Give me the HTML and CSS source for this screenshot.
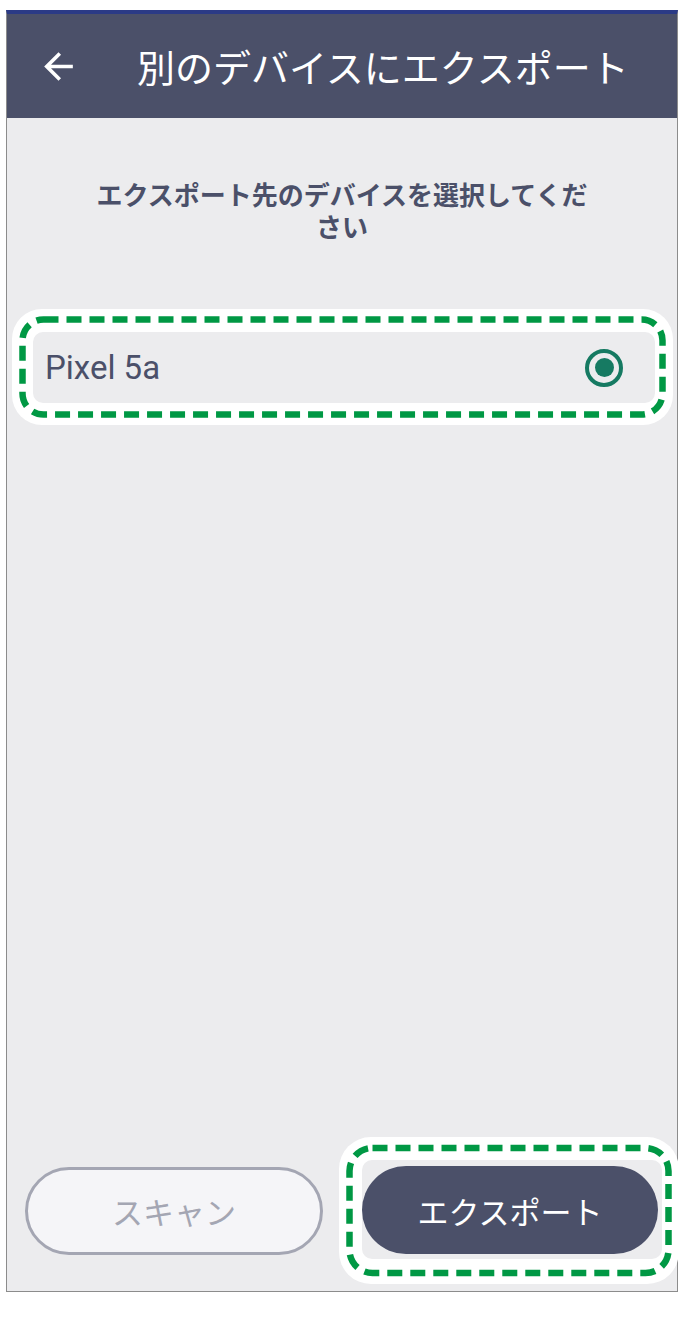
FILE: index.html
```html
<!DOCTYPE html>
<html lang="ja">
<head>
  <meta charset="UTF-8" />
  <meta name="viewport" content="width=device-width, initial-scale=1.0" />
  <title>別のデバイスにエクスポート</title>
  <link rel="stylesheet" href="styles.css">
</head>
<body>
  <div class="phone">
    <header class="appbar">
      <svg class="back" viewBox="0 0 24 24" width="43" height="43">
        <path d="M20 11H7.83l5.59-5.59L12 4l-8 8 8 8 1.41-1.41L7.83 13H20v-2z" fill="#fff"/>
      </svg>
      <h1>別のデバイスにエクスポート</h1>
    </header>

    <main class="content">
      <p class="prompt">エクスポート先のデバイスを選択してください</p>

      <div class="mark mark-device">
        <svg class="dash" width="661" height="116" viewBox="0 0 661 116">
          <rect x="10.5" y="10.5" width="640" height="95" rx="21" ry="21"/>
        </svg>
        <div class="device">
          <span class="device-name">Pixel 5a</span>
          <span class="radio"><span class="radio-dot"></span></span>
        </div>
      </div>

      <div class="actions">
        <button class="btn btn-scan">スキャン</button>
        <div class="mark mark-export">
          <svg class="dash" width="340" height="147" viewBox="0 0 340 147">
            <rect x="10.5" y="11" width="319" height="125" rx="23" ry="23"/>
          </svg>
          <div class="shot">
            <button class="btn btn-export">エクスポート</button>
          </div>
        </div>
      </div>
    </main>
  </div>
</body>
</html>
```

FILE: styles.css
```css
* {
  box-sizing: border-box;
}
body {
  margin: 0;
  background: #fff;
  font-family: "Noto Sans CJK JP", "Noto Sans", sans-serif;
}
.phone {
  margin: 10px 0 0 6px;
  width: 672px;
  height: 1282px;
  border: 1px solid #8c8c8c;
  border-top: 4px solid #2b3a86;
  display: flex;
  flex-direction: column;
  background: #ececee;
}
.appbar {
  height: 104px;
  flex-shrink: 0;
  background: #4b5069;
  display: flex;
  align-items: center;
  padding-left: 30px;
}
.back {
  flex-shrink: 0;
}
.appbar h1 {
  margin: 0 0 0 57px;
  font-size: 38px;
  font-weight: 400;
  color: #fff;
  line-height: 1;
}
.content {
  flex: 1;
  display: flex;
  flex-direction: column;
}
.prompt {
  width: 510px;
  margin: 60px auto 0;
  text-align: center;
  font-size: 26px;
  font-weight: 700;
  line-height: 32px;
  color: #4b5069;
}
.mark {
  position: relative;
  background: #fff;
  flex-shrink: 0;
}
.dash {
  position: absolute;
  left: 0;
  top: 0;
  pointer-events: none;
}
.dash rect {
  fill: none;
  stroke: #009844;
  stroke-width: 6.5;
  stroke-dasharray: 15 8;
}
.mark-device {
  width: 661px;
  height: 116px;
  margin: 67px 0 0 5px;
  border-radius: 30px;
  padding: 23px 18px 22px 21px;
}
.device {
  height: 71px;
  background: #ececee;
  border-radius: 10px;
  display: flex;
  align-items: center;
  justify-content: space-between;
  padding: 0 32px 0 12px;
}
.device-name {
  font-family: Roboto, "Noto Sans", sans-serif;
  font-size: 33px;
  color: #4b5069;
}
.radio {
  width: 38px;
  height: 38px;
  border: 4px solid #167a62;
  border-radius: 50%;
  display: flex;
  align-items: center;
  justify-content: center;
}
.radio-dot {
  width: 19px;
  height: 19px;
  border-radius: 50%;
  background: #167a62;
}
.actions {
  margin-top: auto;
  margin-bottom: 7px;
  padding-left: 18px;
  display: flex;
  align-items: center;
}
.btn {
  font-family: "Noto Sans CJK JP", sans-serif;
  font-size: 31px;
  font-weight: 400;
  border-radius: 44px;
  flex-shrink: 0;
  cursor: pointer;
}
.btn-scan {
  width: 298px;
  height: 88px;
  background: #f5f5f8;
  border: 3px solid #a4a6b3;
  color: #a4a6b3;
}
.mark-export {
  width: 340px;
  height: 147px;
  margin-left: 16px;
  border-radius: 32px;
  padding: 23px 17px 25px 23px;
}
.shot {
  height: 99px;
  background: #ececee;
  border-radius: 10px;
  padding: 6px 4px 5px 0;
}
.btn-export {
  width: 296px;
  height: 88px;
  background: #4b5069;
  border: none;
  color: #fff;
}
```
